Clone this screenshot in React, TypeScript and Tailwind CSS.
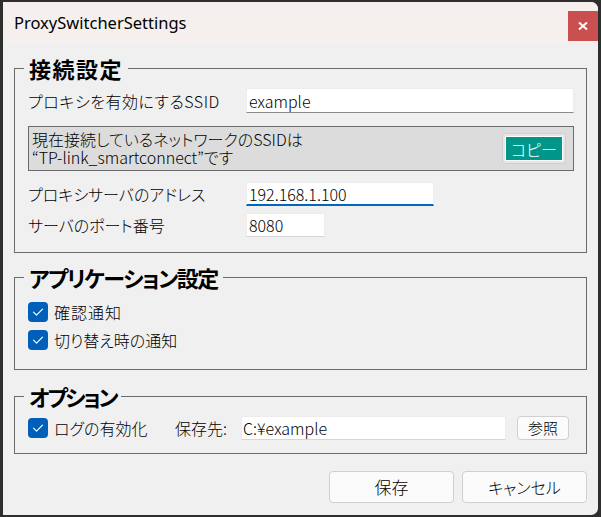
import React from "react";

const jp = "font-['Noto_Sans_CJK_JP',sans-serif] [font-feature-settings:'palt']";

function Check() {
  return (
    <div className="w-[20px] h-[20px] rounded-[4px] bg-[#005fb8] flex items-center justify-center shrink-0">
      <svg width="20" height="20" viewBox="0 0 20 20">
        <polyline points="5.5,10.2 8.5,13.2 14.5,7.2" fill="none" stroke="white" strokeWidth="1.2" strokeLinecap="round" strokeLinejoin="round" />
      </svg>
    </div>
  );
}

function Legend({ children, track }: { children: React.ReactNode; track: string }) {
  return (
    <legend className={`ml-[-4px] px-[5px] text-[22px] leading-[30px] font-bold text-black ${jp} ${track}`}>{children}</legend>
  );
}

export default function App() {
  return (
    <div className="w-[601px] h-[517px] bg-[#2e2e2e] pl-[3px] pt-[2px] overflow-hidden">
      <div className={`w-[595px] h-[513px] rounded-r-[7px] overflow-hidden bg-[#f0f0f0] flex flex-col ${jp}`}>
        {/* title bar */}
        <div className="h-[42px] bg-[#f5f0ed] flex justify-between shrink-0">
          <div className="pt-[11px] pl-[11px] text-[16.5px] leading-[20px] text-black font-['Noto_Sans',sans-serif] [font-feature-settings:normal]">
            ProxySwitcherSettings
          </div>
          <div className="mt-[9px] w-[30px] h-[30px] bg-[#c9504f] flex items-center justify-center">
            <svg width="10" height="8" viewBox="0 0 10 8">
              <path d="M1 0.5 L9 7.5 M9 0.5 L1 7.5" stroke="white" strokeWidth="2" fill="none" />
            </svg>
          </div>
        </div>

        <div className="flex-1 px-[11px] pt-[9px] text-[16px] font-light text-black">
          {/* 接続設定 */}
          <fieldset className="border border-[#6b6b6b] px-[13px] pt-[5px] pb-[15px] pr-[12px]">
            <Legend track="tracking-[1.5px]">接続設定</Legend>
            <div className="flex items-center h-[25px]">
              <div className="w-[218px] leading-[20px] tracking-[0.5px]">プロキシを有効にするSSID</div>
              <div className="flex-1 h-[25px] bg-white border border-[#ececec] border-b-[#8a8a8a] pl-[2px] flex items-center leading-[20px]">
                example
              </div>
            </div>
            <div className="mt-[13px] h-[45px] bg-[#dcdcdc] border border-[#6b6b6b] flex items-center justify-between pl-[3px] pr-[7px]">
              <div className="leading-[18px] pb-[1px]">
                <div>現在接続しているネットワークのSSIDは</div>
                <div>“TP-link_smartconnect”です</div>
              </div>
              <div className="w-[64px] h-[31px] bg-[#e6e6e6] border border-[#cfcfcf] rounded-[2px] p-[2px]">
                <div className="w-full h-full bg-[#00968a] border border-white flex items-center justify-center text-white leading-[20px]">
                  コピー
                </div>
              </div>
            </div>
            <div className="mt-[11px] flex items-center h-[24px]">
              <div className="w-[218px] leading-[20px]">プロキシサーバのアドレス</div>
              <div className="w-[188px] h-[24px] bg-white border border-[#ececec] border-b-2 border-b-[#0067c0] pl-[2px] flex items-center leading-[20px]">
                192.168.1.100
              </div>
            </div>
            <div className="mt-[7px] flex items-center h-[24px]">
              <div className="w-[218px] leading-[20px]">サーバのポート番号</div>
              <div className="w-[79px] h-[24px] bg-white border border-[#ececec] border-b-[#d6d6d6] pl-[2px] flex items-center leading-[20px]">
                8080
              </div>
            </div>
          </fieldset>

          {/* アプリケーション設定 */}
          <fieldset className="mt-[9px] border border-[#6b6b6b] px-[13px] pt-[10px] pb-[19px]">
            <Legend track="tracking-[-1.5px]">アプリケーション設定</Legend>
            <div className="flex items-center h-[20px] gap-[6px]">
              <Check />
              <span className="leading-[20px] tracking-[1px]">確認通知</span>
            </div>
            <div className="mt-[8px] flex items-center h-[20px] gap-[6px]">
              <Check />
              <span className="leading-[20px]">切り替え時の通知</span>
            </div>
          </fieldset>

          {/* オプション */}
          <fieldset className="mt-[11px] border border-[#6b6b6b] px-[13px] pt-[5px] pb-[13px]">
            <Legend track="tracking-[-2.5px]">オプション</Legend>
            <div className="flex items-center h-[24px]">
              <div className="w-[147px] flex items-center gap-[6px]">
                <Check />
                <span className="leading-[20px]">ログの有効化</span>
              </div>
              <div className="w-[66px] leading-[20px]">保存先:</div>
              <div className="w-[265px] h-[24px] bg-white border border-[#ececec] border-b-[#d6d6d6] pl-[1px] flex items-center leading-[20px]">
                C:¥example
              </div>
              <div className="ml-[11px] w-[52px] h-[24px] bg-[#fbfbfb] border border-[#d0d0d0] rounded-[4px] flex items-center justify-center text-[15px] leading-[20px]">
                参照
              </div>
            </div>
          </fieldset>

          {/* buttons */}
          <div className="mt-[17px] flex justify-end gap-[8px]">
            <div className="w-[125px] h-[32px] bg-[#fbfbfb] border border-[#d0d0d0] rounded-[4px] flex items-center justify-center leading-[20px] text-[17px]">
              保存
            </div>
            <div className="w-[125px] h-[32px] bg-[#fbfbfb] border border-[#d0d0d0] rounded-[4px] flex items-center justify-center leading-[20px]">
              キャンセル
            </div>
          </div>
        </div>
      </div>
    </div>
  );
}
